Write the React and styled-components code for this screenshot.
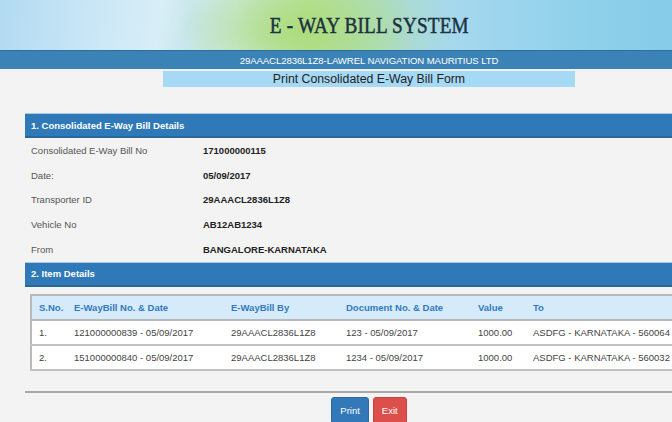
import React from "react";
import styled, { createGlobalStyle } from "styled-components";

const Global = createGlobalStyle`
  html, body { margin: 0; padding: 0; }
  body {
    background: #f3f3f3;
    overflow: hidden;
    font-family: "Liberation Sans", Arial, sans-serif;
  }
`;

const Page = styled.div`
  width: 738px;
  min-height: 422px;
  background: #f3f3f3;
`;

const Banner = styled.header`
  height: 50px;
  display: flex;
  align-items: center;
  justify-content: center;
  background:
    linear-gradient(100deg, rgba(255,255,255,0) 0%, rgba(255,255,255,0.35) 22%, rgba(255,255,255,0) 26%, rgba(255,255,255,0) 100%),
    radial-gradient(ellipse 120px 60px at 300px 30px, rgba(170,220,120,0.9), rgba(170,220,120,0) 100%),
    linear-gradient(90deg, #b2daf1 0%, #c2e4f4 20%, #cfe9e0 32%, #b9e09d 42%, #aedcc6 52%, #a5d8ef 62%, #8ed0ea 80%, #80c8e6 100%);
`;

const Title = styled.h1`
  margin: 0;
  font-family: "Liberation Serif", "Times New Roman", serif;
  font-weight: normal;
  font-size: 24px;
  letter-spacing: 0.2px;
  color: #1d323f;
  transform: scaleX(0.8);
  -webkit-text-stroke: 0.5px #1d323f;
`;

const CompanyBar = styled.div`
  height: 18px;
  border-top: 1px solid #2e6e9a;
  background: #3b83b6;
  color: #fff;
  font-size: 9.6px;
  display: flex;
  align-items: center;
  justify-content: center;
  letter-spacing: -0.1px;
`;

const FormTab = styled.div`
  width: 412px;
  height: 16px;
  margin: 2px auto 0;
  background: #a6d9f6;
  color: #222;
  font-size: 12.3px;
  display: flex;
  align-items: center;
  justify-content: center;
`;

const Section = styled.section`
  margin: ${(p) => p.$top}px 25px 0;
`;

const SectionHead = styled.div`
  height: 22px;
  border-top: 1px solid #a9cbe4;
  border-bottom: 2px solid #2a6797;
  background: #2f79b9;
  color: #fff;
  font-weight: bold;
  font-size: 9.5px;
  padding-left: 6px;
  display: flex;
  align-items: center;
`;

const DetailRow = styled.div`
  display: grid;
  grid-template-columns: 172px 1fr;
  height: 24.8px;
  align-items: center;
  padding-left: 6px;
  font-size: 9.5px;
`;

const Label = styled.span`
  color: #555;
`;

const Value = styled.span`
  color: #222;
  font-weight: bold;
`;

const Table = styled.table`
  margin: 7px 5px 0;
  width: calc(100% - 10px);
  border-collapse: collapse;
  table-layout: fixed;
  border: 2px solid #b9b9b9;
  font-size: 9.5px;
`;

const Th = styled.th`
  height: 23px;
  text-align: left;
  padding: 0 0 0 7px;
  background: #d5ebfa;
  color: #3479bd;
  font-weight: bold;
  border-bottom: 2px solid #b9b9b9;
  white-space: nowrap;
`;

const Td = styled.td`
  height: 23px;
  padding: 0 0 0 7px;
  background: #fff;
  color: #444;
  border-bottom: 2px solid #c2c2c2;
  white-space: nowrap;
  overflow: hidden;
`;

const Rule = styled.hr`
  margin: 20px 0 0 25px;
  border: none;
  border-top: 2px solid #a7a7a7;
  height: 0;
`;

const Actions = styled.div`
  display: flex;
  justify-content: center;
  gap: 4px;
  margin-top: 4px;
`;

const Button = styled.button`
  height: 27px;
  padding: 0 ${(p) => p.$pad}px;
  border: 1px solid ${(p) => (p.$variant === "danger" ? "#c9403c" : "#2b6aa3")};
  border-radius: 3px;
  background: ${(p) => (p.$variant === "danger" ? "#dc4f4b" : "#3378b8")};
  color: #fff;
  font-family: "Liberation Sans", Arial, sans-serif;
  font-size: 9.5px;
  cursor: pointer;
`;

const details = [
  ["Consolidated E-Way Bill No", "171000000115"],
  ["Date:", "05/09/2017"],
  ["Transporter ID", "29AAACL2836L1Z8"],
  ["Vehicle No", "AB12AB1234"],
  ["From", "BANGALORE-KARNATAKA"],
];

const cols = [
  ["S.No.", 36],
  ["E-WayBill No. & Date", 157],
  ["E-WayBill By", 115],
  ["Document No. & Date", 132],
  ["Value", 55],
  ["To", null],
];

const items = [
  ["1.", "121000000839 - 05/09/2017", "29AAACL2836L1Z8", "123 - 05/09/2017", "1000.00", "ASDFG - KARNATAKA - 560064"],
  ["2.", "151000000840 - 05/09/2017", "29AAACL2836L1Z8", "1234 - 05/09/2017", "1000.00", "ASDFG - KARNATAKA - 560032"],
];

export default function App() {
  return (
    <Page>
      <Global />
      <Banner>
        <Title>E - WAY BILL SYSTEM</Title>
      </Banner>
      <CompanyBar>29AAACL2836L1Z8-LAWREL NAVIGATION MAURITIUS LTD</CompanyBar>
      <FormTab>Print Consolidated E-Way Bill Form</FormTab>

      <Section $top={26}>
        <SectionHead>1. Consolidated E-Way Bill Details</SectionHead>
        {details.map(([l, v]) => (
          <DetailRow key={l}>
            <Label>{l}</Label>
            <Value>{v}</Value>
          </DetailRow>
        ))}
      </Section>

      <Section $top={0}>
        <SectionHead>2. Item Details</SectionHead>
        <Table>
          <colgroup>
            {cols.map(([h, w]) => (
              <col key={h} style={w ? { width: w } : undefined} />
            ))}
          </colgroup>
          <thead>
            <tr>
              {cols.map(([h]) => (
                <Th key={h}>{h}</Th>
              ))}
            </tr>
          </thead>
          <tbody>
            {items.map((r) => (
              <tr key={r[0]}>
                {r.map((c, i) => (
                  <Td key={i}>{c}</Td>
                ))}
              </tr>
            ))}
          </tbody>
        </Table>
      </Section>

      <Rule />
      <Actions>
        <Button $pad={8}>Print</Button>
        <Button $variant="danger" $pad={8}>Exit</Button>
      </Actions>
    </Page>
  );
}
